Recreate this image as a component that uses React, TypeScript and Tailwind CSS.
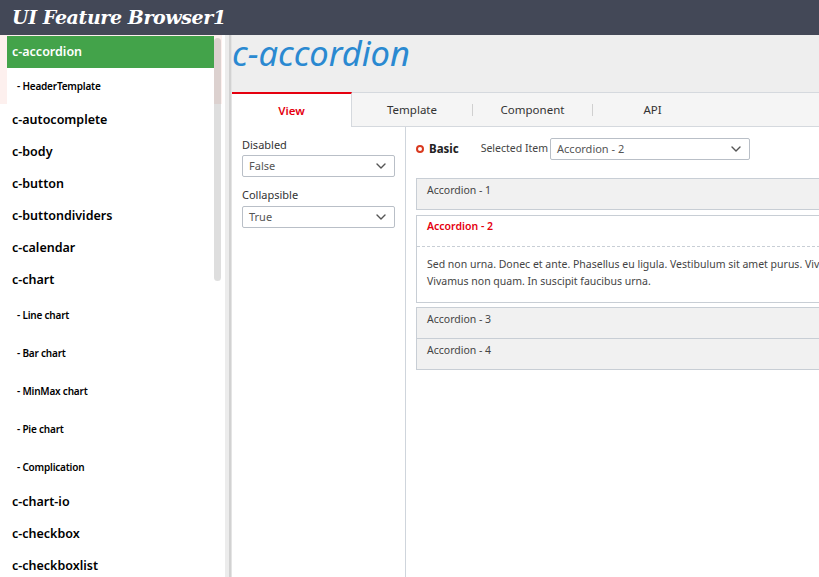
import React from 'react';

const navTop = ['c-autocomplete', 'c-body', 'c-button', 'c-buttondividers', 'c-calendar', 'c-chart'];
const chartSubs = ['Line chart', 'Bar chart', 'MinMax chart', 'Pie chart', 'Complication'];
const navBottom = ['c-chart-io', 'c-checkbox', 'c-checkboxlist'];

const Chevron: React.FC = () => (
  <svg width="10" height="6" viewBox="0 0 10 6" className="shrink-0">
    <path d="M1 1l4 4 4-4" fill="none" stroke="#555" strokeWidth="1.4" strokeLinecap="round" strokeLinejoin="round" />
  </svg>
);

const Select: React.FC<{ value: string; className?: string }> = ({ value, className = '' }) => (
  <div
    className={`h-[22px] flex items-center justify-between pl-[6px] pr-[8px] border border-[#b9bfc7] rounded-[2px] bg-white text-[11px] text-[#555] ${className}`}
  >
    <span>{value}</span>
    <Chevron />
  </div>
);

const App: React.FC = () => {
  return (
    <div className="w-[819px] h-[577px] overflow-hidden flex flex-col bg-white font-['Noto_Sans',sans-serif]">
      {/* Top bar */}
      <header className="h-[35px] shrink-0 bg-[#434857] flex items-center pl-[12px]">
        <h1 className="text-white text-[19px] font-bold italic font-['DejaVu_Serif',serif] tracking-[-0.4px]">
          UI Feature Browser1
        </h1>
      </header>

      <div className="flex flex-1 min-h-0">
        {/* Sidebar */}
        <aside className="w-[222px] shrink-0 relative overflow-hidden bg-white">
          <div className="bg-[#fdf0ee] pt-px pl-[7px] pr-[8px]">
            <div className="h-[32px] bg-[#43a34a] text-white text-[12.5px] font-semibold flex items-center pl-[5px]">
              c-accordion
            </div>
            <div className="h-[36px] bg-white text-black text-[10px] font-semibold tracking-[-0.2px] flex items-center pl-[10px]">
              - HeaderTemplate
            </div>
          </div>
          {navTop.map((n) => (
            <div key={n} className="h-[32px] flex items-center pl-[12px] text-[12.5px] font-semibold text-black">
              {n}
            </div>
          ))}
          {chartSubs.map((n) => (
            <div key={n} className="h-[38px] flex items-center pl-[17px] text-[10px] font-semibold tracking-[-0.2px] text-black">
              - {n}
            </div>
          ))}
          {navBottom.map((n) => (
            <div key={n} className="h-[32px] flex items-center pl-[12px] text-[12.5px] font-semibold text-black">
              {n}
            </div>
          ))}
          {/* scrollbar thumb */}
          <div className="absolute top-[3px] right-[1px] w-[7px] h-[243px] rounded-full bg-black/[0.13]" />
        </aside>

        {/* Splitter */}
        <div className="w-[10px] shrink-0 flex">
          <div className="w-[3px] bg-white" />
          <div className="w-[4px] bg-[#ececec]" />
          <div className="w-[2px] bg-[#d2d2d2]" />
          <div className="w-[1px] bg-[#e4e4e4]" />
        </div>

        {/* Main */}
        <main className="flex-1 min-w-0 flex flex-col bg-[#eeeeee]">
          <div className="h-[57px] shrink-0 pt-px">
            <div className="text-[34.5px] italic leading-[34px] text-[#2a89d1]">c-accordion</div>
          </div>

          {/* Tabs */}
          <div className="h-[35px] shrink-0 flex bg-[#f5f5f5] border-t border-b border-[#d5d9de] text-[11.5px] text-[#333]">
            <div className="w-[120px] -mt-px -mb-px bg-white border-t-2 border-t-[#e5000f] border-r border-r-[#d5d9de] flex items-center justify-center font-semibold text-[#e5000f]">
              View
            </div>
            <div className="w-[120px] flex items-center justify-center">Template</div>
            <div className="w-px h-[12px] self-center bg-[#d0d0d0]" />
            <div className="w-[119px] flex items-center justify-center">Component</div>
            <div className="w-px h-[12px] self-center bg-[#d0d0d0]" />
            <div className="w-[119px] flex items-center justify-center">API</div>
          </div>

          <div className="flex flex-1 min-h-0 bg-white">
            {/* Options */}
            <div className="w-[174px] shrink-0 border-r border-[#cfd5dc] px-[10px] pt-[11px] text-[11px] text-[#333]">
              <div className="leading-[14px]">Disabled</div>
              <Select value="False" className="mt-[3px]" />
              <div className="leading-[14px] mt-[11px]">Collapsible</div>
              <Select value="True" className="mt-[4px]" />
            </div>

            {/* Demo */}
            <div className="flex-1 min-w-0 overflow-hidden pl-[10px] pt-[11px]">
              <div className="flex items-center h-[22px]">
                <span className="w-[8px] h-[8px] rounded-full border-2 border-[#d9391f] shrink-0" />
                <span className="ml-[5px] text-[11.5px] font-bold text-[#222]">Basic</span>
                <span className="ml-[22px] text-[10.5px] text-[#444]">Selected Item</span>
                <Select value="Accordion - 2" className="ml-[2px] w-[200px]" />
              </div>

              <div className="w-[560px] mt-[18px] text-[10.5px] text-[#444]">
                <div className="h-[32px] border border-[#c8ced5] bg-[#f1f1f1] px-[10px] leading-[18px] pt-[2px]">
                  Accordion - 1
                </div>
                <div className="mt-[5px] border border-[#c8ced5] bg-white">
                  <div className="h-[31px] px-[10px] leading-[20px] font-semibold text-[#e5000f] border-b border-dashed border-[#c8ced5]">
                    Accordion - 2
                  </div>
                  <div className="px-[10px] pt-[9px] pb-[12px] text-[10.5px] leading-[17px]">
                    <div className="whitespace-nowrap">
                      Sed non urna. Donec et ante. Phasellus eu ligula. Vestibulum sit amet purus. Vivamus hendrerit, dolor at aliquet laoreet.
                    </div>
                    <div>Vivamus non quam. In suscipit faucibus urna.</div>
                  </div>
                </div>
                <div className="mt-[4px] h-[32px] border border-[#c8ced5] bg-[#f1f1f1] px-[10px] leading-[18px] pt-[2px]">
                  Accordion - 3
                </div>
                <div className="h-[31px] border border-t-0 border-[#c8ced5] bg-[#f1f1f1] px-[10px] leading-[18px] pt-[2px]">
                  Accordion - 4
                </div>
              </div>
            </div>
          </div>
        </main>
      </div>
    </div>
  );
};

export default App;
